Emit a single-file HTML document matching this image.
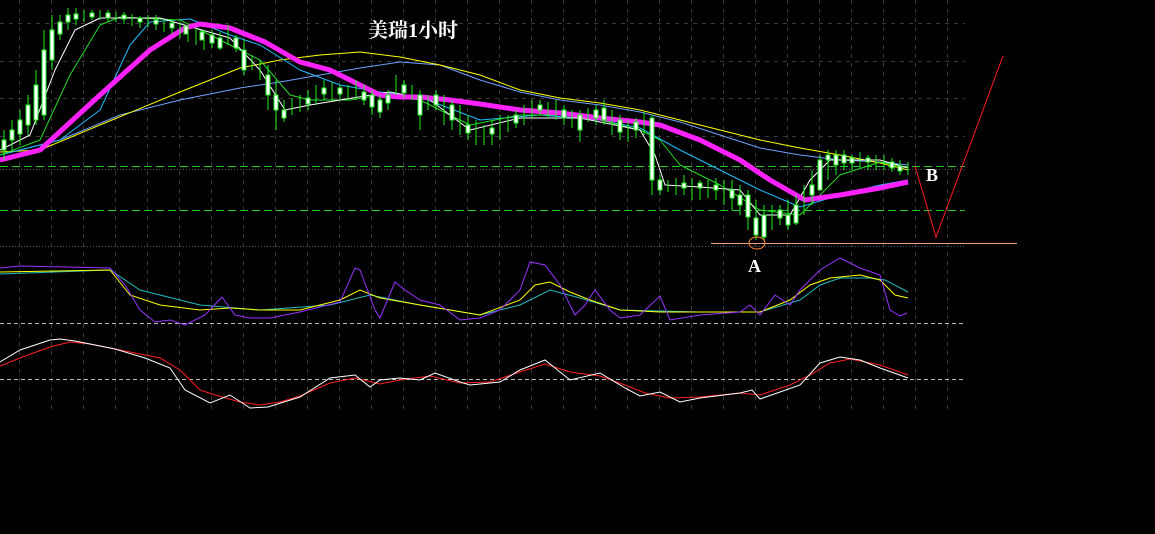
<!DOCTYPE html>
<html><head><meta charset="utf-8"><style>
html,body{margin:0;padding:0;background:#000;}
svg{display:block}
</style></head><body>
<svg width="1155" height="534" viewBox="0 0 1155 534" xmlns="http://www.w3.org/2000/svg">
<rect width="1155" height="534" fill="#000"/>
<g stroke="#3a3a3a" stroke-width="1" stroke-dasharray="4,5">
<path d="M19.5 0V410M51.5 0V410M83.5 0V410M115.5 0V410M147.5 0V410M179.5 0V410M211.5 0V410M243.5 0V410M275.5 0V410M307.5 0V410M339.5 0V410M371.5 0V410M403.5 0V410M435.5 0V410M467.5 0V410M499.5 0V410M531.5 0V410M563.5 0V410M595.5 0V410M627.5 0V410M659.5 0V410M691.5 0V410M723.5 0V410M755.5 0V410M787.5 0V410M819.5 0V410M851.5 0V410M883.5 0V410M915.5 0V410M947.5 0V410"/>
<path d="M0 23.5H965M0 61.5H965M0 98.5H965M0 136.5H965"/>
</g>
<g stroke="#555577" stroke-width="1" stroke-dasharray="1,2">
<path d="M0 169.5H965M0 246.5H965"/>
</g>
<g stroke="#22cc22" stroke-width="1" stroke-dasharray="8,4">
<path d="M0 166.5H965M0 210.5H965"/>
</g>
<g stroke="#bbb" stroke-width="1" stroke-dasharray="4,3">
<path d="M0 323.5H965M0 379.5H965"/>
</g>
<text x="368" y="37" fill="#fff" font-family="'Liberation Serif','Noto Serif CJK SC',serif" font-size="20" font-weight="bold">美瑞1小时</text>
<!-- MAs -->
<g fill="none" stroke-linejoin="round">
<polyline stroke="#6fa0ff" stroke-width="1" points="0,155 60,140 120,115 180,100 240,88 280,82 320,75 360,68 400,62 440,65 480,80 520,92 560,100 600,105 640,112 680,122 720,135 760,148 800,155 840,160 880,162 908,165"/>
<polyline stroke="#ffff00" stroke-width="1" points="0,152 40,150 100,125 180,92 240,68 280,60 320,55 360,52 400,57 440,65 480,75 520,90 560,98 600,103 640,110 680,120 720,130 760,140 800,148 840,155 880,163 908,170"/>
<polyline stroke="#22bbff" stroke-width="1" points="0,155 60,140 100,110 130,45 150,22 190,19 230,35 260,45 300,70 340,85 380,92 420,97 480,120 540,115 600,120 640,128 680,150 720,170 760,190 800,207 840,195 880,185 908,180"/>
<polyline stroke="#22dd22" stroke-width="1" points="0,155 40,140 70,75 100,25 120,17 180,20 230,45 260,60 290,95 310,100 350,100 380,95 420,100 470,125 520,115 580,115 640,130 660,140 680,165 720,185 760,210 800,215 840,175 880,162 908,168"/>
<polyline stroke="#ffffff" stroke-width="1" points="0,150 30,135 55,70 75,30 100,18 160,18 230,38 260,70 285,110 310,105 340,100 390,92 430,100 470,130 520,118 580,118 640,130 655,155 665,185 700,187 740,190 760,215 790,215 810,180 830,160 880,160 908,168"/>
<polyline stroke="#ff22ff" stroke-width="5" points="0,160 40,150 100,95 150,50 185,28 200,24 230,28 265,42 300,62 330,70 360,85 380,95 400,97 420,97 450,100 480,104 520,110 560,113 600,118 640,122 660,125 700,140 740,160 770,180 805,200 840,195 880,188 908,182"/>
</g>
<!-- candles -->
<g stroke="#22ee22" stroke-width="1" fill="#fff">
<path d="M4 130V160M12 120V150M20 110V145M28 95V135M36 70V125M44 30V120M52 15V70M60 15V40M68 8V30M76 8V25M84 10V22M92 10V20M100 10V20M108 10V22M116 12V22M124 12V24M132 14V26M140 16V28M148 15V27M156 15V30M164 20V32M172 20V34M180 22V38M188 25V42M196 28V45M204 30V50M212 30V48M220 32V50M228 25V45M236 35V52M244 40V75M252 55V70M260 60V80M268 65V110M276 80V130M284 100V122M292 98V115M300 95V112M308 90V110M316 85V105M324 80V100M332 82V100M340 85V100M348 85V100M356 80V100M364 85V105M372 90V115M380 95V118M388 90V110M396 75V95M404 80V98M412 85V100M420 90V130M428 95V110M436 90V110M444 95V125M452 100V130M460 105V135M468 115V140M476 120V145M484 125V145M492 120V145M500 115V140M508 115V132M516 110V128M524 105V125M532 100V118M540 100V115M548 102V118M556 100V120M564 105V125M572 110V128M580 110V142M588 108V122M596 105V125M604 100V125M612 110V135M620 115V140M628 120V142M636 118V138M644 112V135M652 115V195M660 175V195M668 180V192M676 178V195M684 175V195M692 178V200M700 180V200M708 180V198M716 178V200M724 180V205M732 180V210M740 185V215M748 190V230M756 200V240M764 205V240M772 205V230M780 205V225M788 200V230M796 195V225M804 185V215M812 170V205M820 155V190M828 150V180M836 150V175M844 150V170M852 155V170M860 152V168M868 155V170M876 155V170M884 155V170M892 158V172M900 160V175M908 162V175"/>
<rect x="2" y="140" width="4" height="10"/><rect x="10" y="130" width="4" height="10"/><rect x="18" y="120" width="4" height="14"/><rect x="26" y="105" width="4" height="20"/><rect x="34" y="85" width="4" height="35"/><rect x="42" y="50" width="4" height="65"/><rect x="50" y="30" width="4" height="30"/><rect x="58" y="22" width="4" height="12"/><rect x="66" y="15" width="4" height="7"/><rect x="74" y="14" width="4" height="5"/><rect x="90" y="13" width="4" height="4"/><rect x="106" y="13" width="4" height="5"/><rect x="122" y="15" width="4" height="4"/><rect x="138" y="18" width="4" height="4"/><rect x="154" y="20" width="4" height="4"/><rect x="170" y="23" width="4" height="5"/><rect x="184" y="26" width="4" height="8"/><rect x="200" y="32" width="4" height="8"/><rect x="210" y="35" width="4" height="8"/><rect x="218" y="38" width="4" height="10"/><rect x="234" y="38" width="4" height="10"/><rect x="242" y="50" width="4" height="20"/><rect x="266" y="75" width="4" height="20"/><rect x="274" y="95" width="4" height="15"/><rect x="282" y="110" width="4" height="8"/><rect x="306" y="98" width="4" height="6"/><rect x="322" y="88" width="4" height="6"/><rect x="338" y="88" width="4" height="6"/><rect x="362" y="92" width="4" height="8"/><rect x="370" y="95" width="4" height="12"/><rect x="378" y="100" width="4" height="12"/><rect x="386" y="95" width="4" height="8"/><rect x="402" y="85" width="4" height="8"/><rect x="418" y="95" width="4" height="20"/><rect x="434" y="95" width="4" height="10"/><rect x="450" y="105" width="4" height="15"/><rect x="466" y="125" width="4" height="8"/><rect x="490" y="128" width="4" height="6"/><rect x="514" y="115" width="4" height="8"/><rect x="538" y="105" width="4" height="5"/><rect x="562" y="110" width="4" height="8"/><rect x="578" y="115" width="4" height="15"/><rect x="594" y="110" width="4" height="8"/><rect x="602" y="108" width="4" height="12"/><rect x="618" y="120" width="4" height="12"/><rect x="634" y="122" width="4" height="8"/><rect x="650" y="118" width="4" height="62"/><rect x="658" y="180" width="4" height="10"/><rect x="682" y="183" width="4" height="5"/><rect x="698" y="183" width="4" height="5"/><rect x="714" y="185" width="4" height="5"/><rect x="730" y="190" width="4" height="8"/><rect x="738" y="195" width="4" height="10"/><rect x="746" y="195" width="4" height="22"/><rect x="754" y="218" width="4" height="17"/><rect x="762" y="215" width="4" height="22"/><rect x="778" y="210" width="4" height="8"/><rect x="786" y="215" width="4" height="10"/><rect x="794" y="205" width="4" height="18"/><rect x="810" y="185" width="4" height="10"/><rect x="818" y="160" width="4" height="30"/><rect x="826" y="155" width="4" height="5"/><rect x="834" y="155" width="4" height="10"/><rect x="842" y="155" width="4" height="8"/><rect x="850" y="158" width="4" height="5"/><rect x="866" y="158" width="4" height="4"/><rect x="890" y="162" width="4" height="6"/><rect x="898" y="166" width="4" height="5"/>
</g>
<!-- annotations -->
<polyline fill="none" stroke="#ff1a1a" stroke-width="1" points="915,166 936,237 1003,56"/>
<line x1="711" y1="243.5" x2="1017" y2="243.5" stroke="#f0a070" stroke-width="1"/>
<ellipse cx="757" cy="243" rx="8" ry="6" fill="none" stroke="#ff8c33" stroke-width="1"/>
<text x="926" y="181" fill="#fff" font-family="'Liberation Serif',serif" font-size="18" font-weight="bold">B</text>
<text x="748" y="272" fill="#fff" font-family="'Liberation Serif',serif" font-size="18" font-weight="bold">A</text>
<!-- panel 1 -->
<g fill="none" stroke-width="1">
<polyline stroke="#22bbbb" points="0,274 110,270 140,290 200,305 260,310 330,305 370,295 420,305 480,315 520,305 550,290 580,298 620,310 700,312 760,312 800,300 820,285 840,278 870,278 885,280 908,292"/>
<polyline stroke="#ffff00" points="0,272 110,270 130,295 160,305 200,310 230,308 260,310 300,310 340,300 360,290 380,298 420,305 480,315 520,300 535,285 550,282 570,292 590,300 620,310 660,312 700,312 760,312 790,300 810,285 830,278 860,275 880,280 895,295 908,298"/>
<polyline stroke="#9933ff" points="0,268 20,266 110,268 125,285 140,310 155,322 170,320 185,325 205,315 222,297 235,315 250,318 270,318 300,312 340,302 355,268 360,270 375,310 380,318 395,282 405,290 420,300 440,305 460,320 480,318 500,310 520,290 530,262 545,265 560,285 575,315 585,305 595,290 610,310 620,318 640,315 660,296 670,320 700,315 740,312 750,305 760,315 775,295 790,305 800,290 820,270 840,258 860,268 880,275 890,310 900,316 907,313"/>
</g>
<!-- panel 2 -->
<g fill="none" stroke-width="1">
<polyline stroke="#ff2020" points="0,366 20,358 50,347 70,342 90,344 120,350 160,358 180,370 200,390 215,395 240,402 260,405 280,402 300,396 330,383 355,378 380,384 400,380 430,376 460,383 490,382 520,372 545,364 570,372 600,376 625,385 645,393 670,398 700,397 740,393 760,395 790,385 810,375 830,363 850,359 880,365 908,375"/>
<polyline stroke="#ffffff" points="0,362 20,350 50,340 60,339 75,341 115,349 145,358 170,368 185,390 210,403 230,395 250,408 268,407 300,397 330,378 355,375 370,387 380,380 400,378 420,380 435,373 460,382 470,385 500,382 520,370 545,360 570,380 600,373 625,388 640,396 660,392 680,402 700,398 740,393 752,390 760,399 780,392 800,385 820,363 840,357 860,360 880,368 908,378"/>
</g>
</svg>
</body></html>
